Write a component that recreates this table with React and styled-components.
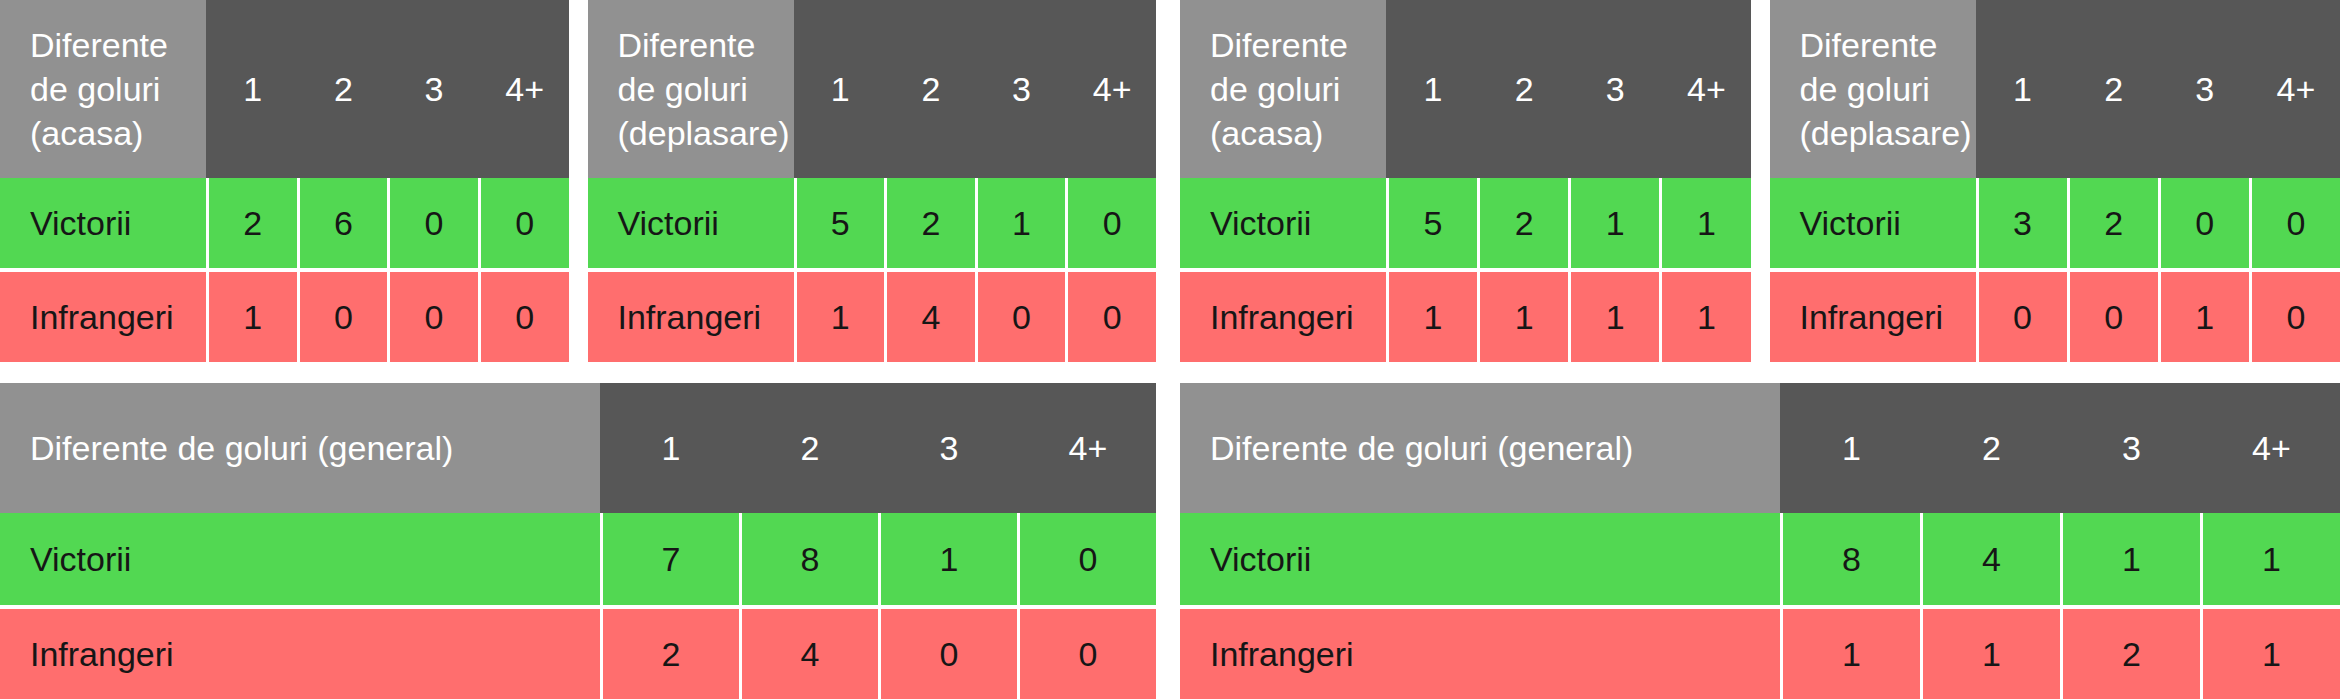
import styled, { createGlobalStyle } from 'styled-components';

const GlobalStyle = createGlobalStyle`
 body {
  margin: 0;
  background: #fff;
  font-family: 'Liberation Sans', Arial, sans-serif;
 }
`;

const tables = {
 top: [
  { label: 'Diferente de goluri (acasa)', wins: [2, 6, 0, 0], losses: [1, 0, 0, 0] },
  { label: 'Diferente de goluri (deplasare)', wins: [5, 2, 1, 0], losses: [1, 4, 0, 0] },
  { label: 'Diferente de goluri (acasa)', wins: [5, 2, 1, 1], losses: [1, 1, 1, 1] },
  { label: 'Diferente de goluri (deplasare)', wins: [3, 2, 0, 0], losses: [0, 0, 1, 0] },
 ],
 bottom: [
  { label: 'Diferente de goluri (general)', wins: [7, 8, 1, 0], losses: [2, 4, 0, 0] },
  { label: 'Diferente de goluri (general)', wins: [8, 4, 1, 1], losses: [1, 1, 2, 1] },
 ],
};

const cols = ['1', '2', '3', '4+'];

function StatsTable({ data, wide }) {
 return (
  <Table>
   <Row $wide={wide} $height={wide ? 130 : 178}>
    <LabelHead>{data.label}</LabelHead>
    {cols.map((c) => (
     <HeadCell key={c}>{c}</HeadCell>
    ))}
   </Row>
   <Row $wide={wide} $height={wide ? 92 : 90} $bg="#52d852">
    <Label>Victorii</Label>
    {data.wins.map((v, i) => (
     <Cell key={i}>{v}</Cell>
    ))}
   </Row>
   <Row $wide={wide} $height={90} $bg="#ff6e6e" $sep>
    <Label>Infrangeri</Label>
    {data.losses.map((v, i) => (
     <Cell key={i}>{v}</Cell>
    ))}
   </Row>
  </Table>
 );
}

export default function App() {
 return (
  <>
   <GlobalStyle />
   <Page>
    <Pair>
     <StatsTable data={tables.top[0]} />
     <StatsTable data={tables.top[1]} />
    </Pair>
    <Pair>
     <StatsTable data={tables.top[2]} />
     <StatsTable data={tables.top[3]} />
    </Pair>
    <StatsTable data={tables.bottom[0]} wide />
    <StatsTable data={tables.bottom[1]} wide />
   </Page>
  </>
 );
}

const Page = styled.div`
 width: 2340px;
 display: grid;
 grid-template-columns: 1156px 1fr;
 column-gap: 24px;
 row-gap: 21px;
`;

const Pair = styled.div`
 display: grid;
 grid-template-columns: 1fr 1fr;
 column-gap: 19px;
`;

const Table = styled.div`
 display: flex;
 flex-direction: column;
`;

const Row = styled.div`
 display: grid;
 grid-template-columns: ${(p) => (p.$wide ? '600px' : '206px')} repeat(4, 1fr);
 height: ${(p) => p.$height}px;
 background: ${(p) => p.$bg || '#575757'};
 border-top: ${(p) => (p.$sep ? '4px solid #fff' : 'none')};
 color: ${(p) => (p.$bg ? '#161616' : '#fff')};
 font-size: 34px;
`;

const LabelHead = styled.div`
 background: #919191;
 padding: 0 0 0 30px;
 display: flex;
 align-items: center;
 line-height: 44px;
`;

const HeadCell = styled.div`
 display: flex;
 align-items: center;
 justify-content: center;
 border-left: 3px solid #575757;
`;

const Label = styled.div`
 padding-left: 30px;
 display: flex;
 align-items: center;
`;

const Cell = styled.div`
 display: flex;
 align-items: center;
 justify-content: center;
 border-left: 3px solid #fff;
`;
